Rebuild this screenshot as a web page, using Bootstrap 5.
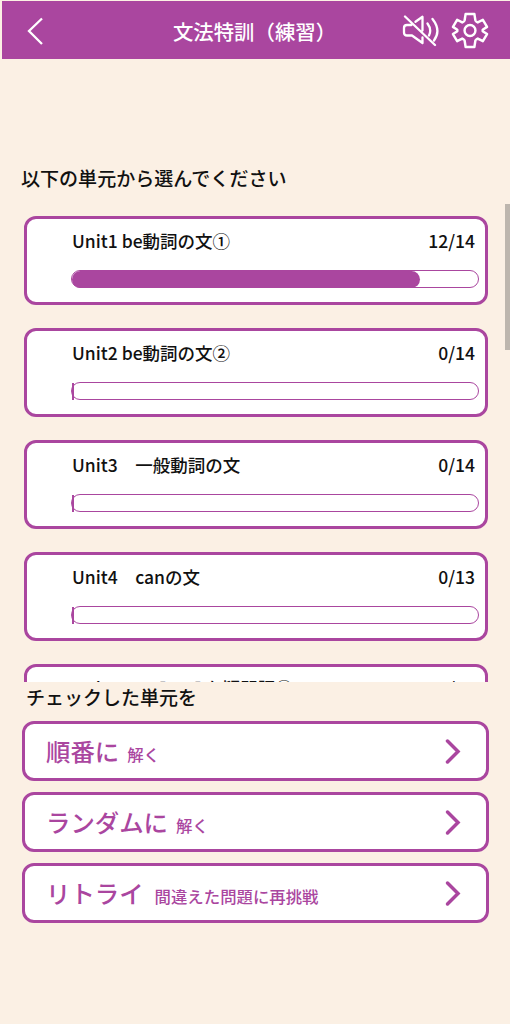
<!DOCTYPE html>
<html lang="ja">
<head>
<meta charset="utf-8">
<meta name="viewport" content="width=device-width, initial-scale=1">
<title>文法特訓（練習）</title>
<link href="https://cdn.jsdelivr.net/npm/bootstrap@5.3.0/dist/css/bootstrap.min.css" rel="stylesheet">
<style>
:root { --plum: #aa469f; --cream: #fbf0e4; }
body { font-family: "Noto Sans CJK JP", sans-serif; font-weight: 500; background: var(--cream); color: #111; height: 1024px; overflow: hidden; line-height: 1.5; }
.topbar { margin: 1px 0 0 2px; height: 58px; background: var(--plum); color: #fff; padding: 0 21px 0 22px; }
.topbar h1 { font-size: 20.4px; font-weight: 500; line-height: 30px; margin: 2px 0 0 -4px; }
.side { width: 92px; gap: 9px; }
.side svg { flex: none; }
.lead-in { font-size: 19.05px; line-height: 28px; margin: 105px 0 0 21px; }
.units { margin: 12px 0 0; height: 478px; overflow: hidden; padding: 12px 22px 0 24px; }
.unit-list { gap: 23px; }
.unit, .action { border: 3px solid var(--plum); border-radius: 12px; background: #fff; }
.unit { height: 89px; flex: none; padding: 9px 6px 0 44px; }
.unit-head { font-size: 17.5px; line-height: 26px; padding: 0 4px 0 1px; }
.unit:last-child .unit-head { margin-top: -1px; }
.meter { height: 18px; margin-top: 16px; border: 1.5px solid var(--plum); border-radius: 9px; }
.meter-fill { height: 17px; background: var(--plum); border-radius: 9px; }
.meter-fill.is-empty { width: 2px; border-radius: 0; }
.thumb { top: 204px; right: 0; width: 5px; height: 146px; background: #bdb6ae; }
.prompt { font-size: 19px; line-height: 28px; margin: 1px 0 0 26px; }
.actions { margin: 10px 21px 0 22px; gap: 11px; }
.action { height: 60px; color: var(--plum); padding: 0 22px 0 21px; text-align: left; font-weight: 500; }
.action strong { font-size: 24.4px; font-weight: 500; line-height: 36px; }
.action span { font-size: 16.4px; margin-left: 8px; }
.action .wide-gap { margin-left: 11px; }
</style>
</head>
<body>
<header class="topbar d-flex align-items-center justify-content-between">
  <div class="side">
    <svg class="d-block" width="24" height="32" viewBox="0 0 24 32" fill="none" stroke="#fff" stroke-width="2.3"><path d="M18 4.500 5 17 18 30"/></svg>
  </div>
  <h1>文法特訓（練習）</h1>
  <div class="side d-flex justify-content-end">
    <svg width="42" height="38" viewBox="0 0 42 38" fill="none" stroke="#fff" stroke-width="2.300" stroke-linejoin="round" stroke-linecap="round"><path d="M11.500 14H7q-3 0-3 3v4.500q0 3 3 3h5l10.500 7.500v-5.500M15.500 10.800l7-5v13.700M5 5.500 35 34M27.500 12.500q4.500 6 1.500 12M32.500 8q9 11.500 1.500 21.500"/></svg>
    <svg width="38" height="38" viewBox="-.5 -1 39 39" fill="none" stroke="#fff" stroke-width="2.500" stroke-linejoin="round"><circle cx="19" cy="19" r="5.600"/><path d="M14.500 2h9l1 6.500q.3 1 1.200 1.500l1.300.7 5.200-2.700 4.300 7.300-4.500 3v1.400l4.500 3-4.300 7.300-5.200-2.700-1.300.7q-.9.500-1.200 1.500l-1 6.500h-9l-1-6.500q-.3-1-1.200-1.500l-1.300-.7L5.800 30l-4.300-7.300 4.500-3v-1.400l-4.500-3L5.800 8l5.200 2.700 1.300-.7q.9-.5 1.200-1.500z"/></svg>
  </div>
</header>
<main>
  <p class="lead-in">以下の単元から選んでください</p>
  <section class="units">
    <div class="unit-list d-flex flex-column">
      <article class="unit"><div class="unit-head d-flex justify-content-between"><span>Unit1 be動詞の文①</span><span>12/14</span></div><div class="meter"><div class="meter-fill" style="width:85.7%"></div></div></article>
      <article class="unit"><div class="unit-head d-flex justify-content-between"><span>Unit2 be動詞の文②</span><span>0/14</span></div><div class="meter"><div class="meter-fill is-empty"></div></div></article>
      <article class="unit"><div class="unit-head d-flex justify-content-between"><span>Unit3　一般動詞の文</span><span>0/14</span></div><div class="meter"><div class="meter-fill is-empty"></div></div></article>
      <article class="unit"><div class="unit-head d-flex justify-content-between"><span>Unit4　canの文</span><span>0/13</span></div><div class="meter"><div class="meter-fill is-empty"></div></div></article>
      <article class="unit"><div class="unit-head d-flex justify-content-between"><span>Unit5　いろいろな疑問詞①</span><span>0/14</span></div><div class="meter"><div class="meter-fill is-empty"></div></div></article>
    </div>
  </section>
  <div class="thumb position-absolute"></div>
  <p class="prompt">チェックした単元を</p>
  <div class="actions d-flex flex-column">
    <button class="action d-flex align-items-center justify-content-between"><div><strong>順番に</strong><span>解く</span></div><svg width="20" height="28" viewBox="0 0 20 28" fill="none" stroke="currentColor" stroke-width="3.500" stroke-linecap="round"><path d="m3.500 4 10.500 10.500L3.500 25"/></svg></button>
    <button class="action d-flex align-items-center justify-content-between"><div><strong>ランダムに</strong><span>解く</span></div><svg width="20" height="28" viewBox="0 0 20 28" fill="none" stroke="currentColor" stroke-width="3.500" stroke-linecap="round"><path d="m3.500 4 10.500 10.500L3.500 25"/></svg></button>
    <button class="action d-flex align-items-center justify-content-between"><div><strong>リトライ</strong><span class="wide-gap">間違えた問題に再挑戦</span></div><svg width="20" height="28" viewBox="0 0 20 28" fill="none" stroke="currentColor" stroke-width="3.500" stroke-linecap="round"><path d="m3.500 4 10.500 10.500L3.500 25"/></svg></button>
  </div>
</main>
<script src="https://cdn.jsdelivr.net/npm/bootstrap@5.3.0/dist/js/bootstrap.bundle.min.js"></script>
</body>
</html>
